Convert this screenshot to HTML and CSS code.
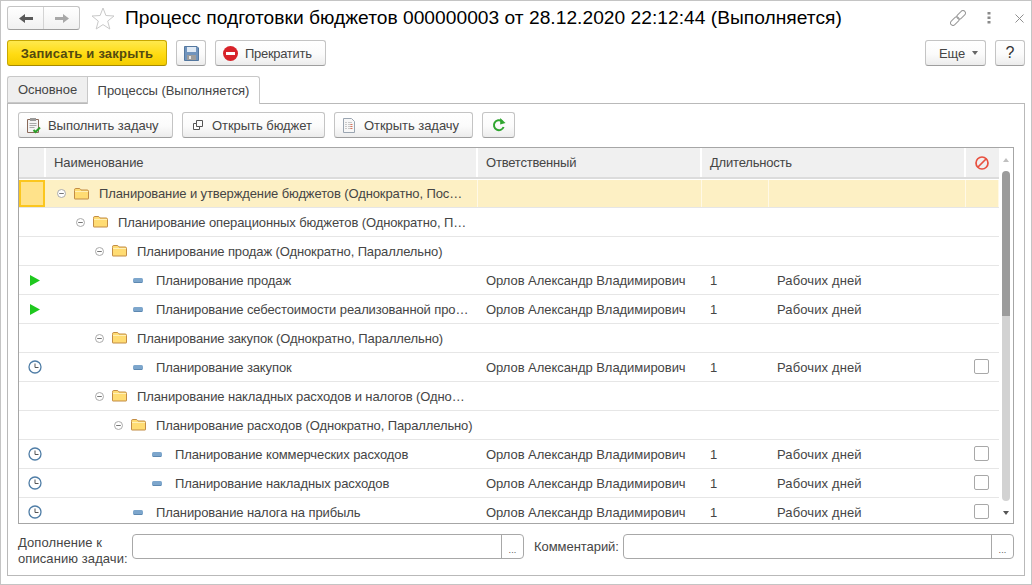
FILE: index.html
```html
<!DOCTYPE html>
<html lang="ru">
<head>
<meta charset="utf-8">
<title>Процесс подготовки бюджетов</title>
<link rel="stylesheet" href="styles.css">
</head>
<body>
<svg class="defs" width="0" height="0" aria-hidden="true">
  <symbol id="folder" viewBox="0 0 15 12">
    <path d="M.5 2.500V1.800C.5 1 1 .5 1.800.5h3.400c.6 0 1 .3 1.300.8l.5.7h6.200c.8 0 1.300.5 1.300 1.300v7.400c0 .3-.2.300-.5.300H1c-.3 0-.5 0-.5-.3z" fill="#ffdc73" stroke="#c28c45"/>
    <path d="M1 3.500h13" stroke="#fff0b8" fill="none"/>
  </symbol>
  <symbol id="minus" viewBox="0 0 9 9">
    <circle cx="4.500" cy="4.500" r="4" fill="#fff" stroke="#aaa"/>
    <path d="M2.200 4.500h4.600" stroke="#777"/>
  </symbol>
  <symbol id="dash" viewBox="0 0 10 5">
    <rect width="10" height="5" rx="1.500" fill="#7da6cc"/>
    <rect x="1" y="4" width="8" height="1" fill="#5d88b0"/>
  </symbol>
  <symbol id="play" viewBox="0 0 10 11">
    <path d="M0 0l10 5.500L0 11z" fill="#1ec81e"/>
  </symbol>
  <symbol id="clock" viewBox="0 0 14 14">
    <circle cx="7" cy="7" r="6" fill="#fff" stroke="#4f7da6" stroke-width="1.300"/>
    <path d="M7 3.500V7.500H10.500" fill="none" stroke="#555"/>
  </symbol>
</svg>
<div class="window">
  <header class="titlebar">
    <div class="nav">
      <button class="nav-btn" type="button">
        <svg width="14" height="9" viewBox="0 0 14 9"><path d="M0 4.500L6 0v3h8v3H6v3z" fill="#5a5a5a"/></svg>
      </button>
      <button class="nav-btn" type="button">
        <svg width="14" height="9" viewBox="0 0 14 9"><path d="M14 4.500L8 0v3H0v3h8v3z" fill="#a8a8a8"/></svg>
      </button>
    </div>
    <svg class="star" width="24" height="23" viewBox="0 0 24 23"><path d="M12 1l2.900 7.500 8.100.5-6.300 5.100 2.100 7.900-6.800-4.400L5.200 22l2.100-7.900L1 9l8.100-.5z" fill="#fff" stroke="#c9c9c9"/></svg>
    <h1 class="title">Процесс подготовки бюджетов 000000003 от 28.12.2020 22:12:44 (Выполняется)</h1>
    <div class="win-tools">
      <svg class="t-link" width="16" height="16" viewBox="0 0 16 16"><g transform="rotate(-45 8 8)" fill="none" stroke="#9a9a9a"><rect x="-1.500" y="5.500" width="10" height="5" rx="2.500"/><rect x="7.500" y="5.500" width="10" height="5" rx="2.500"/></g></svg>
      <svg class="t-dots" width="4" height="12" viewBox="0 0 4 12"><g fill="#8a8a8a"><rect x="0.500" y="0" width="3" height="2.500"/><rect x="0.500" y="4.500" width="3" height="2.500"/><rect x="0.500" y="9" width="3" height="2.500"/></g></svg>
      <svg class="t-close" width="9" height="9" viewBox="0 0 9 9"><path d="M.5.500l8 8m0-8l-8 8" stroke="#8f8f8f" fill="none"/></svg>
    </div>
  </header>
  <div class="commands">
    <button class="btn primary" type="button">Записать и закрыть</button>
    <button class="btn btn-save" type="button">
      <svg width="15" height="15" viewBox="0 0 15 15"><path d="M.5.500h12.500l1.500 1.500v12.500H.5z" fill="#6f93bd" stroke="#53779f"/><rect x="3" y="1" width="9" height="5" fill="#dfe9f4"/><rect x="3" y="9" width="9" height="5" fill="#9c9c9c"/><rect x="5" y="10" width="2" height="3" fill="#e5e5e5"/></svg>
    </button>
    <button class="btn btn-stop" type="button">
      <svg width="15" height="15" viewBox="0 0 15 15"><circle cx="7.500" cy="7.500" r="7.500" fill="#d8232a"/><rect x="3" y="6" width="9" height="3" fill="#fff"/></svg>
      Прекратить
    </button>
    <span class="spacer"></span>
    <button class="btn btn-more" type="button">Еще <i class="caret"></i></button>
    <button class="btn btn-help" type="button">?</button>
  </div>
  <div class="tabs">
    <div class="tab">Основное</div>
    <div class="tab active">Процессы (Выполняется)</div>
  </div>
  <section class="panel">
    <div class="toolbar">
      <button class="btn btn-run" type="button">
        <svg width="16" height="17" viewBox="0 0 16 17"><path d="M1.500 2.500h11v13h-11z" fill="#f4f4f4" stroke="#8a6a5a"/><rect x="4" y="1" width="6" height="3" fill="#9a9a9a"/><path d="M3.500 6.500h7m-7 2h7m-7 2h5" stroke="#a9a9a9"/><path d="M7.500 13l2 2 4.500-4.500" fill="none" stroke="#2ca02c" stroke-width="2"/></svg>
        Выполнить задачу
      </button>
      <button class="btn btn-budget" type="button">
        <svg width="10" height="10" viewBox="0 0 10 10"><path d="M3.500.500h6v6h-6z" fill="none" stroke="#555"/><path d="M.500 3.500h3v3h3v3h-6z" fill="#fff" stroke="#555"/></svg>
        Открыть бюджет
      </button>
      <button class="btn btn-task" type="button">
        <svg width="12" height="15" viewBox="0 0 12 15"><path d="M.500.500h8l3 3v11h-11z" fill="#f7f7f7" stroke="#9aa5b1"/><path d="M2.500 4.500h2m1 0h4m-7 2h2m1 0h4m-7 2h2m1 0h4m-7 2h2m1 0h4" stroke="#9a9a9a" stroke-dasharray="1 1"/><path d="M7.500 6.500h2m-2 2h2m-2 2h2" stroke="#d9765f"/></svg>
        Открыть задачу
      </button>
      <button class="btn btn-refresh" type="button">
        <svg width="14" height="14" viewBox="0 0 14 14"><path d="M11.600 9A5 5 0 1 1 10 3.200" fill="none" stroke="#2fa52f" stroke-width="2"/><path d="M8.200 0v6.400L13.500 5z" fill="#2fa52f"/></svg>
      </button>
    </div>
    <div class="table">
      <div class="table-main">
        <div class="row head">
          <div class="cell"></div>
          <div class="cell">Наименование</div>
          <div class="cell">Ответственный</div>
          <div class="cell span2">Длительность</div>
          <div class="cell center">
            <svg class="i-cancel" width="14" height="14" viewBox="0 0 14 14"><circle cx="7" cy="7" r="6" fill="none" stroke="#e8503f" stroke-width="1.700"/><path d="M3 11l8-8" stroke="#e8503f" stroke-width="1.700"/></svg>
          </div>
        </div>
        <div class="row selected">
          <div class="cell marker"><span class="current"></span></div>
          <div class="cell name l0"><svg class="i-minus"><use href="#minus"/></svg><svg class="i-folder"><use href="#folder"/></svg><span>Планирование и утверждение бюджетов (Однократно, Пос…</span></div>
          <div class="cell"></div><div class="cell"></div><div class="cell"></div><div class="cell"></div>
        </div>
        <div class="row">
          <div class="cell"></div>
          <div class="cell name l1"><svg class="i-minus"><use href="#minus"/></svg><svg class="i-folder"><use href="#folder"/></svg><span>Планирование операционных бюджетов (Однократно, П…</span></div>
          <div class="cell"></div><div class="cell"></div><div class="cell"></div><div class="cell"></div>
        </div>
        <div class="row">
          <div class="cell"></div>
          <div class="cell name l2"><svg class="i-minus"><use href="#minus"/></svg><svg class="i-folder"><use href="#folder"/></svg><span>Планирование продаж (Однократно, Параллельно)</span></div>
          <div class="cell"></div><div class="cell"></div><div class="cell"></div><div class="cell"></div>
        </div>
        <div class="row">
          <div class="cell marker"><svg class="i-play"><use href="#play"/></svg></div>
          <div class="cell name l3 leaf"><svg class="i-dash"><use href="#dash"/></svg><span>Планирование продаж</span></div>
          <div class="cell">Орлов Александр Владимирович</div><div class="cell">1</div><div class="cell unit">Рабочих дней</div><div class="cell"></div>
        </div>
        <div class="row">
          <div class="cell marker"><svg class="i-play"><use href="#play"/></svg></div>
          <div class="cell name l3 leaf"><svg class="i-dash"><use href="#dash"/></svg><span>Планирование себестоимости реализованной про…</span></div>
          <div class="cell">Орлов Александр Владимирович</div><div class="cell">1</div><div class="cell unit">Рабочих дней</div><div class="cell"></div>
        </div>
        <div class="row">
          <div class="cell"></div>
          <div class="cell name l2"><svg class="i-minus"><use href="#minus"/></svg><svg class="i-folder"><use href="#folder"/></svg><span>Планирование закупок (Однократно, Параллельно)</span></div>
          <div class="cell"></div><div class="cell"></div><div class="cell"></div><div class="cell"></div>
        </div>
        <div class="row">
          <div class="cell marker"><svg class="i-clock"><use href="#clock"/></svg></div>
          <div class="cell name l3 leaf"><svg class="i-dash"><use href="#dash"/></svg><span>Планирование закупок</span></div>
          <div class="cell">Орлов Александр Владимирович</div><div class="cell">1</div><div class="cell unit">Рабочих дней</div><div class="cell center"><i class="check"></i></div>
        </div>
        <div class="row">
          <div class="cell"></div>
          <div class="cell name l2"><svg class="i-minus"><use href="#minus"/></svg><svg class="i-folder"><use href="#folder"/></svg><span>Планирование накладных расходов и налогов (Одно…</span></div>
          <div class="cell"></div><div class="cell"></div><div class="cell"></div><div class="cell"></div>
        </div>
        <div class="row">
          <div class="cell"></div>
          <div class="cell name l3"><svg class="i-minus"><use href="#minus"/></svg><svg class="i-folder"><use href="#folder"/></svg><span>Планирование расходов (Однократно, Параллельно)</span></div>
          <div class="cell"></div><div class="cell"></div><div class="cell"></div><div class="cell"></div>
        </div>
        <div class="row">
          <div class="cell marker"><svg class="i-clock"><use href="#clock"/></svg></div>
          <div class="cell name l4 leaf"><svg class="i-dash"><use href="#dash"/></svg><span>Планирование коммерческих расходов</span></div>
          <div class="cell">Орлов Александр Владимирович</div><div class="cell">1</div><div class="cell unit">Рабочих дней</div><div class="cell center"><i class="check"></i></div>
        </div>
        <div class="row">
          <div class="cell marker"><svg class="i-clock"><use href="#clock"/></svg></div>
          <div class="cell name l4 leaf"><svg class="i-dash"><use href="#dash"/></svg><span>Планирование накладных расходов</span></div>
          <div class="cell">Орлов Александр Владимирович</div><div class="cell">1</div><div class="cell unit">Рабочих дней</div><div class="cell center"><i class="check"></i></div>
        </div>
        <div class="row last">
          <div class="cell marker"><svg class="i-clock"><use href="#clock"/></svg></div>
          <div class="cell name l3 leaf"><svg class="i-dash"><use href="#dash"/></svg><span>Планирование налога на прибыль</span></div>
          <div class="cell">Орлов Александр Владимирович</div><div class="cell">1</div><div class="cell unit">Рабочих дней</div><div class="cell center"><i class="check"></i></div>
        </div>
      </div>
      <div class="scrollbar">
        <i class="arrow up"></i>
        <div class="track"><div class="thumb"></div></div>
        <i class="arrow down"></i>
      </div>
    </div>
    <div class="footer">
      <label class="flabel first">Дополнение к описанию задачи:</label>
      <div class="input in-a"><span class="field"></span><span class="pick">...</span></div>
      <label class="flabel second">Комментарий:</label>
      <div class="input in-b"><span class="field"></span><span class="pick">...</span></div>
    </div>
  </section>
</div>
</body>
</html>
```
FILE: styles.css
```css
* { box-sizing: border-box; }
html, body { margin: 0; padding: 0; height: 100%; background: #fff; overflow: hidden; }
body { font-family: "Liberation Sans", Arial, sans-serif; font-size: 13px; letter-spacing: -.05px; color: #454545; }
.defs { position: absolute; }
svg { display: block; flex: none; }

.window {
  width: 1032px;
  height: 585px;
  border: 1px solid #c4c4c4;
  padding: 5px 6px 0 6px;
}

.titlebar { display: flex; align-items: center; height: 24px; }
.nav {
  display: flex;
  width: 73px;
  height: 24px;
  border: 1px solid #c4c4c4;
  border-bottom-color: #9e9e9e;
  border-radius: 3px;
  background: linear-gradient(#ffffff, #f1f1f1);
}
.nav-btn {
  flex: 1;
  display: flex;
  align-items: center;
  justify-content: center;
  background: none;
  border: 0;
  padding: 0;
}
.nav-btn + .nav-btn { border-left: 1px solid #d4d4d4; }
.star { margin-left: 11px; }
.title {
  margin: 0 0 0 10px;
  font-size: 19.2px;
  font-weight: 400;
  letter-spacing: .02px;
  color: #000;
  white-space: nowrap;
}
.win-tools { margin-left: auto; display: flex; align-items: center; }
.t-dots { margin-left: 21px; }
.t-close { margin-left: 24px; margin-right: 1px; }

.btn {
  height: 26px;
  display: inline-flex;
  align-items: center;
  justify-content: flex-start;
  padding: 0;
  font: inherit;
  letter-spacing: inherit;
  color: #454545;
  border: 1px solid #c4c4c4;
  border-bottom-color: #9e9e9e;
  border-radius: 3px;
  background: linear-gradient(#fff 0%, #fbfbfb 55%, #ececec 100%);
  flex: none;
}
.commands { display: flex; align-items: center; margin-top: 10px; gap: 9px; height: 26px; }
.primary {
  width: 160px;
  justify-content: center;
  font-weight: 700;
  letter-spacing: .2px;
  color: #534a10;
  border-color: #c8a800;
  border-bottom-color: #a68a00;
  background: linear-gradient(#ffe94d 0%, #ffdb12 55%, #f4cd00 100%);
}
.btn-save { width: 30px; justify-content: center; }
.btn-stop { width: 111px; gap: 7px; padding-left: 7px; letter-spacing: -.3px; }
.spacer { flex: 1; }
.btn-more { width: 61px; gap: 7px; padding-left: 13px; }
.caret { border: 3px solid transparent; border-top: 4px solid #666; border-bottom: 0; }
.btn-help { width: 30px; justify-content: center; font-size: 16px; color: #333; }

.tabs { display: flex; margin-top: 10px; height: 28px; position: relative; z-index: 1; }
.tab {
  height: 27px;
  display: flex;
  align-items: center;
  width: 80px;
  justify-content: center;
  background: #efefef;
  border: 1px solid #c8c8c8;
  border-right: 0;
  border-radius: 3px 0 0 0;
}
.tab.active {
  width: 173px;
  height: 28px;
  background: #fff;
  border-right: 1px solid #c8c8c8;
  border-bottom: 0;
  border-radius: 0 3px 0 0;
}

.panel {
  width: 1018px;
  height: 473px;
  margin-top: -1px;
  border: 1px solid #b9b9b9;
  padding: 8px 10px 0 10px;
}
.toolbar { display: flex; gap: 9px; height: 26px; }
.btn-run { width: 155px; gap: 6px; padding-left: 7px; }
.btn-budget { width: 143px; gap: 9px; padding-left: 10px; }
.btn-task { width: 139px; gap: 9px; padding-left: 8px; }
.btn-refresh { width: 33px; justify-content: center; }

.table {
  display: flex;
  width: 996px;
  height: 377px;
  margin-top: 9px;
  border: 1px solid #a6a6a6;
}
.table-main { width: 980px; height: 100%; overflow: hidden; flex: none; }
.row {
  display: grid;
  grid-template-columns: 27px 432px 224px 67px 197px 33px;
  height: 29px;
  border-bottom: 1px solid #e6e6e6;
}
.cell {
  display: flex;
  align-items: center;
  padding: 0 8px;
  white-space: nowrap;
  overflow: hidden;
  min-width: 0;
}
.unit { letter-spacing: .12px; }
.row.head { height: 31px; border-bottom: 2px solid #dcdcdc; letter-spacing: -.2px; }
.row.head .cell { background: #f0f0f0; border-right: 2px solid #fff; }
.row.head .cell:nth-child(2) { letter-spacing: -.05px; }
.row.head .cell:last-child { border-right: 0; }
.span2 { grid-column: span 2; }
.center { justify-content: center; padding: 0 2px 0 0; }
.row.head .center { padding: 0 2px 0 0; }
.row.selected { background: #fdf0c4; border-top: 1px solid #fff; }
.row.selected .cell { border-right: 1px solid #fff9e6; }
.row.selected .cell:first-child { border-right: 0; }
.marker { padding: 0; justify-content: flex-start; }
.current {
  width: 26px;
  height: 27px;
  background: #ffe28a;
  border: 2px solid #fbc61e;
}
.name { padding: 0; letter-spacing: -.11px; }
.name.l0 { padding-left: 11px; }
.name.l1 { padding-left: 30px; }
.name.l2 { padding-left: 49px; }
.name.l3 { padding-left: 68px; }
.name.l4 { padding-left: 87px; }
.name.leaf.l3 { padding-left: 87px; }
.name.leaf.l4 { padding-left: 106px; }
.i-minus { width: 9px; height: 9px; }
.i-folder { width: 15px; height: 12px; margin-left: 8px; margin-right: 10px; }
.i-dash { width: 10px; height: 5px; margin-right: 13px; }
.i-play { width: 10px; height: 11px; margin-left: 11px; }
.i-clock { width: 14px; height: 14px; margin-left: 9px; }
.check {
  display: block;
  width: 15px;
  height: 15px;
  margin-bottom: 1px;
  border: 1px solid #a8a8a8;
  border-radius: 2px;
  background: #fff;
}

.scrollbar {
  width: 14px;
  display: flex;
  flex-direction: column;
  align-items: center;
  padding-top: 10px;
  padding-bottom: 8px;
}
.track { flex: 1; width: 100%; margin: 9px 0 10px; display: flex; }
.thumb {
  width: 8px;
  margin: 0 auto;
  border-radius: 4px;
  background: linear-gradient(#9b9b9b 0, #9b9b9b 44%, #d2d2d2 44%, #d2d2d2 100%);
}
.arrow { border: 3px solid transparent; display: block; }
.arrow.up { border-top: 0; border-bottom: 4px solid #c0c0c0; }
.arrow.down { border-bottom: 0; border-top: 4px solid #555; }

.footer { display: flex; align-items: flex-start; margin-top: 10px; }
.flabel { line-height: 16px; flex: none; }
.flabel.first { width: 114px; margin-top: 1px; letter-spacing: .08px; }
.flabel.second { width: 89px; margin-left: 10px; line-height: 25px; }
.input {
  display: flex;
  height: 25px;
  border: 1px solid #a8a8a8;
  border-radius: 4px;
  background: #fff;
  flex: none;
}
.in-a { width: 392px; }
.in-b { width: 391px; }
.field { flex: 1; }
.pick {
  width: 22px;
  border-left: 1px solid #a8a8a8;
  display: flex;
  align-items: center;
  justify-content: center;
  font-size: 9px;
  letter-spacing: .2px;
  color: #555;
  padding-top: 6px;
}
```
